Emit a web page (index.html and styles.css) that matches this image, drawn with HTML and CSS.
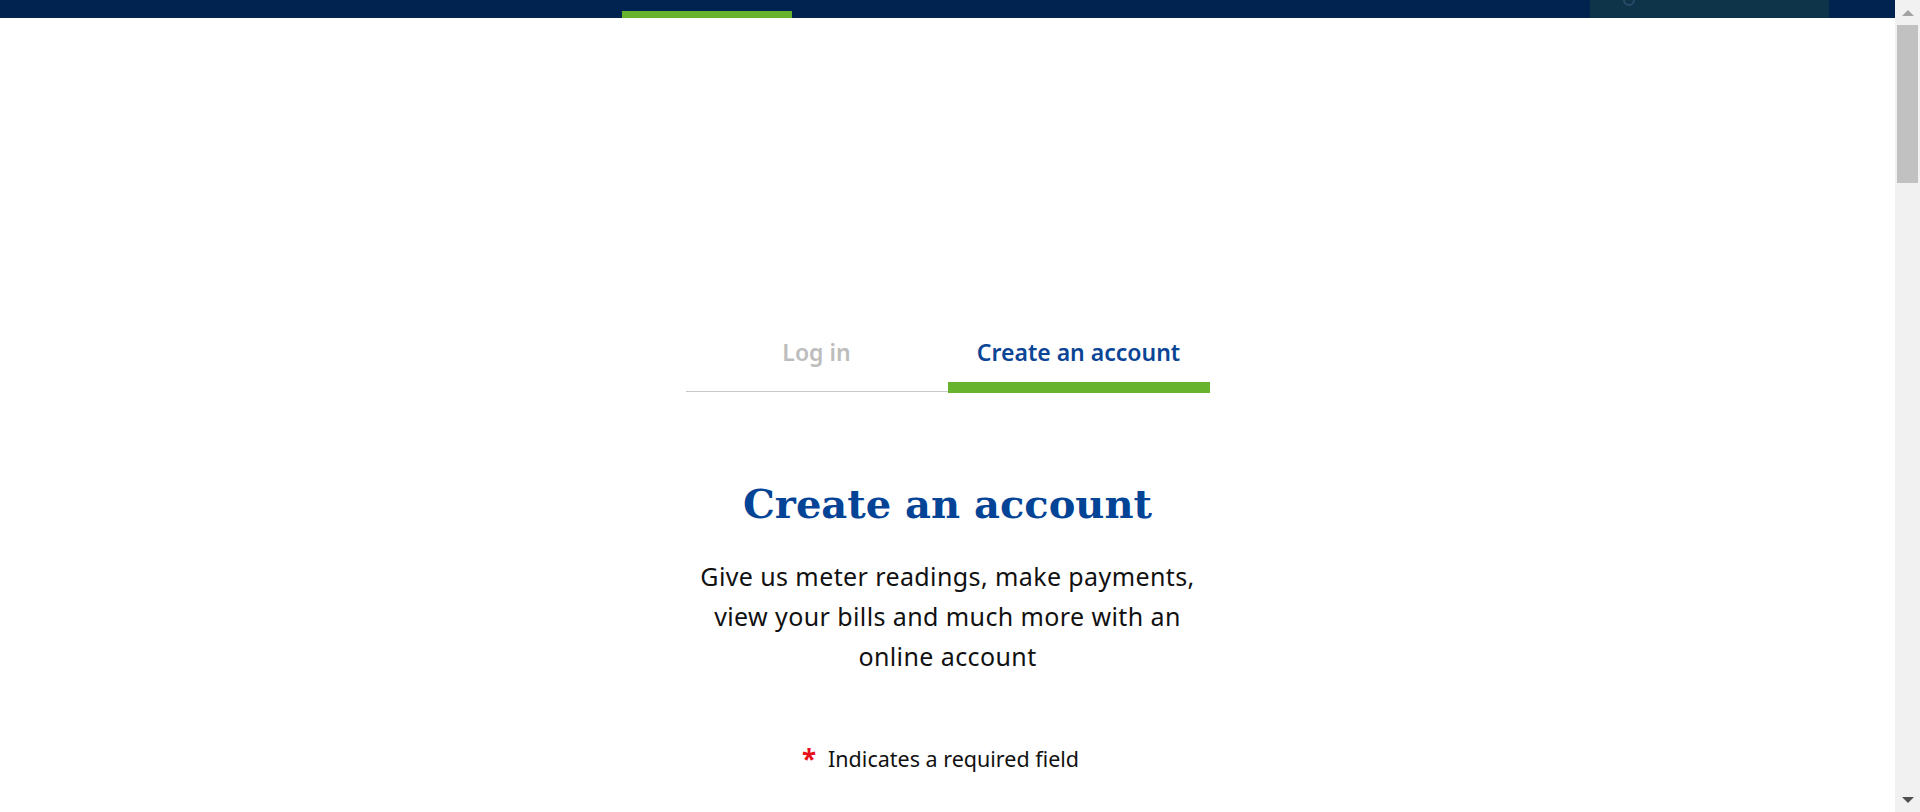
FILE: index.html
```html
<!DOCTYPE html>
<html lang="en">
<head>
<meta charset="utf-8">
<title>Create an account</title>
<link rel="stylesheet" href="styles.css">
</head>
<body>
<div class="window">
  <div class="page">
    <header class="topbar">
      <nav class="nav">
        <span class="nav-item active"></span>
      </nav>
      <div class="account-box">
        <svg class="account-icon" width="14" height="10" viewBox="0 0 14 10"><circle cx="7" cy="0" r="5" fill="none" stroke="#2a4a6a" stroke-width="2"/></svg>
      </div>
    </header>
    <main class="main">
      <div class="tabs">
        <div class="tab">Log in</div>
        <div class="tab tab-active">Create an account</div>
      </div>
      <h1 class="title">Create an account</h1>
      <p class="intro">Give us meter readings, make payments, view your bills and much more with an online account</p>
      <p class="required"><span class="star">*</span>Indicates a required field</p>
    </main>
  </div>
  <div class="scrollbar">
    <div class="sb-btn"><span class="arrow-up"></span></div>
    <div class="sb-track"><div class="sb-thumb"></div></div>
    <div class="sb-btn sb-btn-down"><span class="arrow-down"></span></div>
  </div>
</div>
</body>
</html>
```
FILE: styles.css
```css
html, body {
  margin: 0;
  padding: 0;
  background: #ffffff;
}
.window {
  display: flex;
  width: 1920px;
  height: 812px;
  overflow: hidden;
}
.page {
  flex: 1;
  min-width: 0;
  display: flex;
  flex-direction: column;
}
.topbar {
  height: 18px;
  background: #00234f;
  display: flex;
  justify-content: space-between;
  align-items: stretch;
  flex-shrink: 0;
}
.nav {
  display: flex;
  align-items: flex-end;
  padding-left: 622px;
}
.nav-item.active {
  display: block;
  width: 170px;
  height: 7px;
  background: #67b32e;
}
.account-box {
  width: 239px;
  margin-right: 66px;
  background: #0e3449;
  position: relative;
}
.account-icon {
  position: absolute;
  left: 32px;
  top: 0;
}
.main {
  display: flex;
  flex-direction: column;
  align-items: center;
  padding-top: 319px;
  font-family: "Noto Sans", "Open Sans", sans-serif;
}
.tabs {
  display: flex;
  align-items: flex-start;
  width: 524px;
}
.tab {
  flex: 1;
  text-align: center;
  font-size: 23px;
  font-weight: 600;
  line-height: 30px;
  color: #bdbdbd;
  padding-bottom: 24px;
  border-bottom: 1px solid #c8c8c8;
}
.tab-active {
  color: #0b4596;
  padding-bottom: 15px;
  border-bottom: 11px solid #67b32e;
}
.title {
  margin: 87px 0 0;
  font-family: "DejaVu Serif", "Liberation Serif", serif;
  font-weight: 700;
  font-size: 40px;
  line-height: 48px;
  color: #034496;
  text-align: center;
}
.intro {
  margin: 28px 0 0;
  width: 524px;
  font-size: 25px;
  letter-spacing: 0.4px;
  line-height: 40px;
  color: #111111;
  text-align: center;
}
.required {
  margin: 70px 14px 0 0;
  font-size: 21.5px;
  line-height: 26px;
  color: #111111;
  display: flex;
  align-items: center;
}
.star {
  color: #e8101a;
  font-size: 26px;
  font-weight: 700;
  margin-right: 12px;
  line-height: 26px;
}
.scrollbar {
  width: 25px;
  flex-shrink: 0;
  background: #f1f1f1;
  display: flex;
  flex-direction: column;
}
.sb-btn {
  height: 25px;
  display: flex;
  justify-content: center;
  align-items: center;
}
.sb-btn-down {
  height: 25px;
}
.arrow-up {
  width: 0;
  height: 0;
  border-left: 6px solid transparent;
  border-right: 6px solid transparent;
  border-bottom: 6px solid #a3a3a3;
}
.arrow-down {
  width: 0;
  height: 0;
  border-left: 6px solid transparent;
  border-right: 6px solid transparent;
  border-top: 6px solid #505050;
}
.sb-track {
  flex: 1;
  padding: 0 2px;
}
.sb-thumb {
  height: 158px;
  background: #c1c1c1;
}
```
